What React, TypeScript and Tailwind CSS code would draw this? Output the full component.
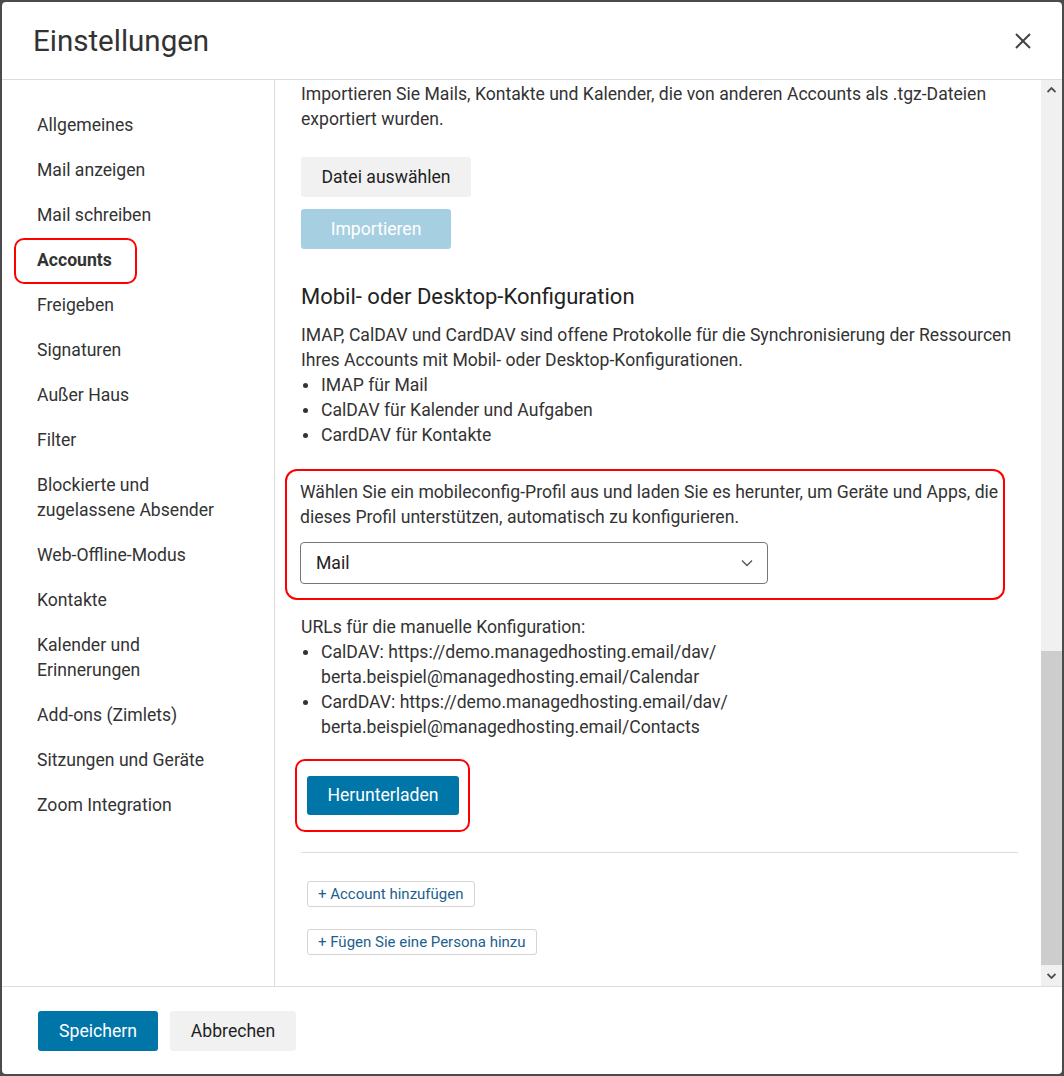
import React from 'react';

const navItems: { label: React.ReactNode; active?: boolean }[] = [
  { label: 'Allgemeines' },
  { label: 'Mail anzeigen' },
  { label: 'Mail schreiben' },
  { label: 'Accounts', active: true },
  { label: 'Freigeben' },
  { label: 'Signaturen' },
  { label: 'Außer Haus' },
  { label: 'Filter' },
  { label: <>Blockierte und<br />zugelassene Absender</> },
  { label: 'Web-Offline-Modus' },
  { label: 'Kontakte' },
  { label: <>Kalender und<br />Erinnerungen</> },
  { label: 'Add-ons (Zimlets)' },
  { label: 'Sitzungen und Geräte' },
  { label: 'Zoom Integration' },
];

function Bullet({ children }: { children: React.ReactNode }) {
  return (
    <li className="flex">
      <span className="w-[20px] shrink-0 pl-[2px] pt-[10px]">
        <span className="block w-[5px] h-[5px] rounded-full bg-[#333]" />
      </span>
      <span>{children}</span>
    </li>
  );
}

export default function App() {
  return (
    <div className="w-[1064px] h-[1076px] bg-[#4b4b4b] p-[2px] font-[Roboto,'Liberation_Sans',sans-serif] text-[17.6px] leading-[25px] text-[#333]">
      <div className="h-full bg-white rounded-[4px] flex flex-col overflow-hidden">
        {/* header */}
        <div className="h-[78px] shrink-0 border-b border-[#dcdcdc] flex items-center justify-between pl-[31px] pr-[30px]">
          <h1 className="text-[29.5px] leading-[34px] text-[#333] pt-[1px]">Einstellungen</h1>
          <svg width="18" height="18" viewBox="0 0 18 18" className="text-[#444]">
            <path d="M2 2 L16 16 M16 2 L2 16" stroke="currentColor" strokeWidth="2" />
          </svg>
        </div>

        {/* body */}
        <div className="flex flex-1 min-h-0">
          <nav className="w-[273px] shrink-0 border-r border-[#dcdcdc] pl-[35px] pt-[33px] flex flex-col gap-5">
            {navItems.map((item, i) =>
              item.active ? (
                <div
                  key={i}
                  className="self-start -ml-[23px] -my-[10.5px] w-[123px] pl-[21px] py-[8.5px] border-2 border-[#f00] rounded-[10px] font-bold"
                >
                  {item.label}
                </div>
              ) : (
                <div key={i}>{item.label}</div>
              )
            )}
          </nav>

          <div className="flex-1 flex min-w-0">
            <div className="flex-1 pl-[26px] pr-[23px] pt-[2px]">
              <p>
                Importieren Sie Mails, Kontakte und Kalender, die von anderen Accounts als .tgz-Dateien<br />
                exportiert wurden.
              </p>
              <button className="mt-[25px] block h-[40px] w-[170px] rounded-[3px] bg-[#f1f1f1] text-[#1f1f1f]">
                Datei auswählen
              </button>
              <button className="mt-[12px] block h-[40px] w-[150px] rounded-[3px] bg-[#a7cfe2] text-white">
                Importieren
              </button>

              <h2 className="mt-[34px] text-[22px] leading-[28px] text-[#222]">Mobil- oder Desktop-Konfiguration</h2>
              <p className="mt-[12px]">
                IMAP, CalDAV und CardDAV sind offene Protokolle für die Synchronisierung der Ressourcen<br />
                Ihres Accounts mit Mobil- oder Desktop-Konfigurationen.
              </p>
              <ul>
                <Bullet>IMAP für Mail</Bullet>
                <Bullet>CalDAV für Kalender und Aufgaben</Bullet>
                <Bullet>CardDAV für Kontakte</Bullet>
              </ul>

              <div className="mt-[21px] -ml-[16px] w-[720px] border-2 border-[#f00] rounded-[12px] pl-[13px] pr-[4px] pt-[8.5px] pb-[14px]">
                <p className="whitespace-nowrap">
                  Wählen Sie ein mobileconfig-Profil aus und laden Sie es herunter, um Geräte und Apps, die<br />
                  dieses Profil unterstützen, automatisch zu konfigurieren.
                </p>
                <div className="mt-[12.5px] w-[468px] h-[42px] border border-[#767676] rounded-[4px] flex items-center justify-between pl-[15px] pr-[14px] text-[#222]">
                  <span>Mail</span>
                  <svg width="12" height="8" viewBox="0 0 12 8" className="text-[#555]">
                    <path d="M1 1.5 L6 6.5 L11 1.5" fill="none" stroke="currentColor" strokeWidth="1.3" />
                  </svg>
                </div>
              </div>

              <p className="mt-[14.5px]">URLs für die manuelle Konfiguration:</p>
              <ul>
                <Bullet>
                  CalDAV: https://demo.managedhosting.email/dav/<br />
                  berta.beispiel@managedhosting.email/Calendar
                </Bullet>
                <Bullet>
                  CardDAV: https://demo.managedhosting.email/dav/<br />
                  berta.beispiel@managedhosting.email/Contacts
                </Bullet>
              </ul>

              <div className="mt-[19.5px] -ml-[6px] w-[175px] border-2 border-[#f00] rounded-[10px] pl-[10px] pt-[15px] pb-[15px]">
                <button className="block h-[39px] w-[152px] rounded-[3px] bg-[#0076a8] text-white">
                  Herunterladen
                </button>
              </div>

              <hr className="mt-[20px] border-t border-[#dcdcdc]" />

              <button className="mt-[28px] ml-[6px] block h-[26px] px-[10px] rounded-[3px] border border-[#d4d4d4] text-[15px] leading-[24px] text-[#1d5f8e]">
                + Account hinzufügen
              </button>
              <button className="mt-[22px] ml-[6px] block h-[26px] px-[10px] rounded-[3px] border border-[#d4d4d4] text-[15px] leading-[24px] text-[#1d5f8e]">
                + Fügen Sie eine Persona hinzu
              </button>
            </div>

            {/* scrollbar */}
            <div className="w-[21px] shrink-0 bg-[#f0f0f0] flex flex-col">
              <div className="h-[20px] flex items-center justify-center">
                <svg width="9" height="6" viewBox="0 0 9 6">
                  <path d="M0.5 5 L4.5 1 L8.5 5" fill="none" stroke="#505050" strokeWidth="1.8" />
                </svg>
              </div>
              <div className="h-[551px]" />
              <div className="flex-1 bg-[#cdcdcd]" />
              <div className="h-[21px] flex items-center justify-center">
                <svg width="9" height="6" viewBox="0 0 9 6">
                  <path d="M0.5 1 L4.5 5 L8.5 1" fill="none" stroke="#505050" strokeWidth="1.8" />
                </svg>
              </div>
            </div>
          </div>
        </div>

        {/* footer */}
        <div className="h-[88px] shrink-0 border-t border-[#dcdcdc] pl-[36px] pt-[24px] flex gap-3 items-start">
          <button className="h-[40px] w-[120px] rounded-[3px] bg-[#0076a8] text-white">Speichern</button>
          <button className="h-[40px] w-[126px] rounded-[3px] bg-[#f1f1f1] text-[#1f1f1f]">Abbrechen</button>
        </div>
      </div>
    </div>
  );
}
